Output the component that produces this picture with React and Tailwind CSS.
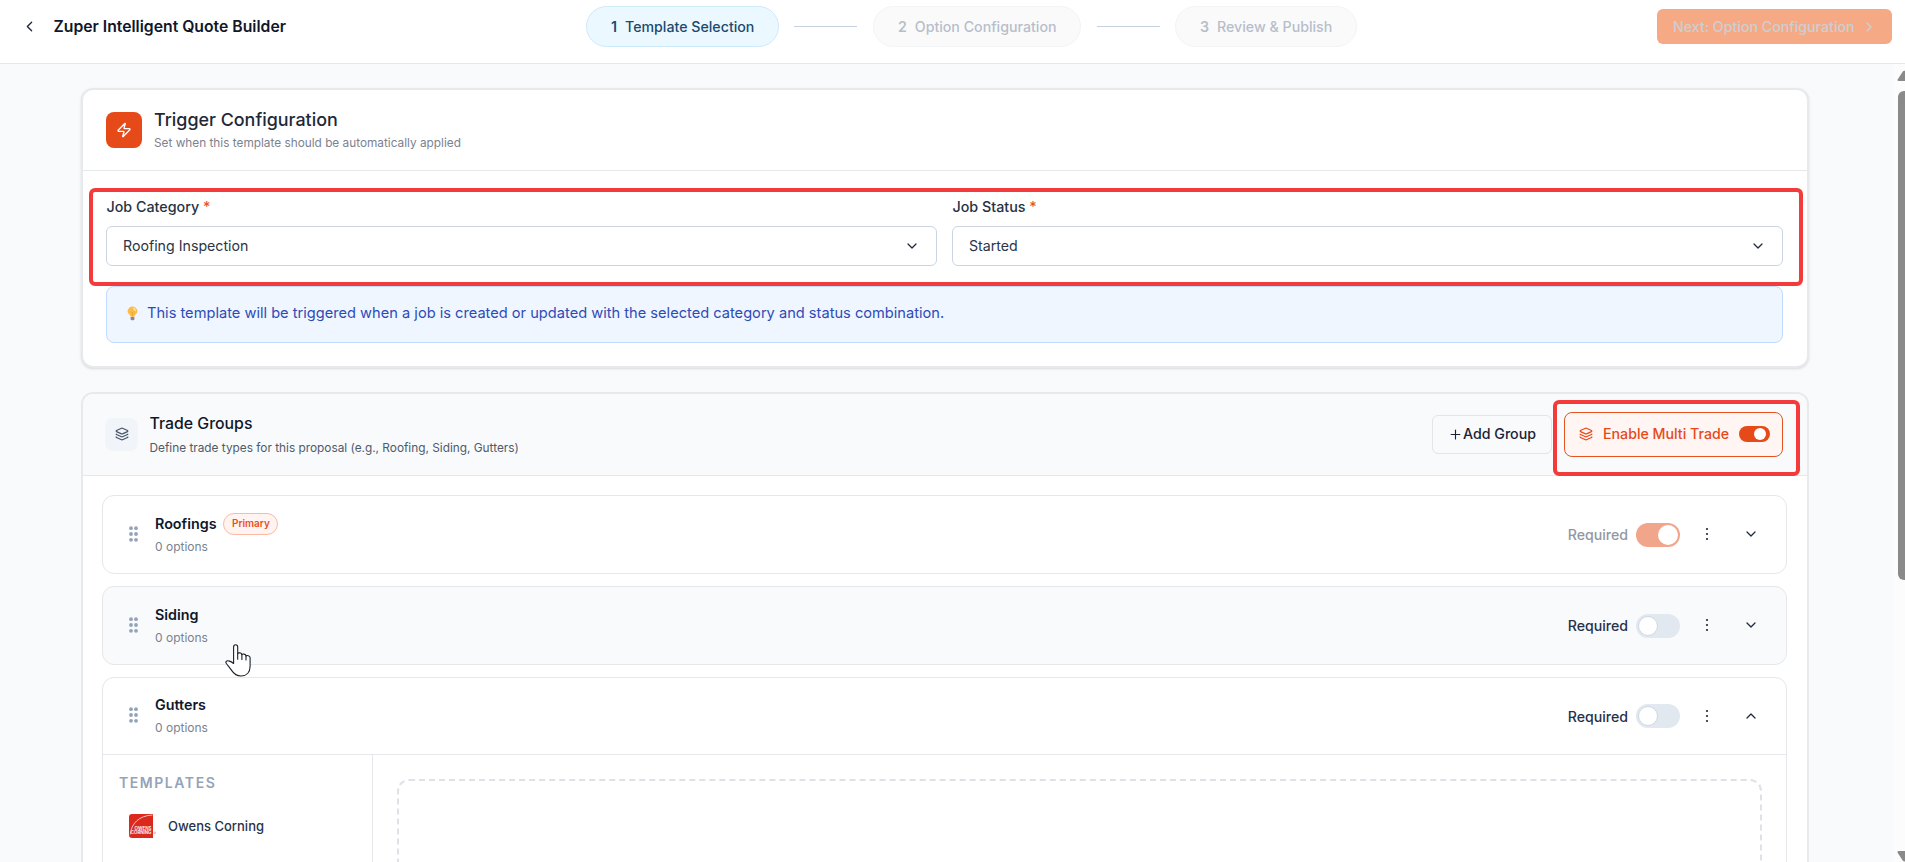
import React from 'react';
import { ChevronDown, ChevronLeft, ChevronRight, ChevronUp, Layers, Plus, Zap } from 'lucide-react';

function Step({ number, label, active }) {
  return (
    <div
      className={
        'flex h-[41px] items-center rounded-full border pl-[24px] pt-px text-[14.2px] leading-5 ' +
        (active ? 'border-[#cdeafb] bg-[#ecf8ff] text-[#1b4a6e]' : 'border-[#f3f4f5] bg-[#fafafa] text-[#b7becb]')
      }
    >
      <span className="font-semibold">{number}</span>
      <span className="ml-2 pr-[23.5px] font-medium">{label}</span>
    </div>
  );
}

function StepLine() {
  return <div className="mx-[15.5px] h-px w-[63px] bg-[#c5d1df]" />;
}

function SelectField({ label, value }) {
  return (
    <div className="flex-1">
      <div className="h-5 pl-[0.5px] text-[14.3px] font-[450] leading-5 text-[#263244]">
        {label} <span className="text-[#e8501f]">*</span>
      </div>
      <div className="mt-[9px] flex h-10 items-center justify-between rounded-md border border-[#cbd5e1] bg-white pl-4 pr-[16px] text-[14.2px] text-[#2a3547]">
        <span>{value}</span>
        <ChevronDown className="size-4 text-[#1e293b]" strokeWidth={1.9} />
      </div>
    </div>
  );
}

function DragHandle() {
  return (
    <svg viewBox="0 0 9 16" className="-mt-[2px] h-4 w-[9px] fill-[#94a3b8]">
      <circle cx="2" cy="2.2" r="1.9" />
      <circle cx="7" cy="2.2" r="1.9" />
      <circle cx="2" cy="8" r="1.9" />
      <circle cx="7" cy="8" r="1.9" />
      <circle cx="2" cy="13.8" r="1.9" />
      <circle cx="7" cy="13.8" r="1.9" />
    </svg>
  );
}

function GroupHeader({ name, primary, locked, open }) {
  return (
    <div className={'flex items-center pl-[26px] pr-[27px] ' + (open ? 'h-[76px]' : 'h-[77px]')}>
      <DragHandle />
      <div className={'ml-[17px] flex-1 ' + (open ? '' : 'pt-px')}>
        <div className="flex h-[22px] items-center text-[14.3px] font-semibold text-[#0f172a]">
          <span>{name}</span>
          {primary && (
            <span className="ml-[7px] flex h-[22px] items-center rounded-full border border-[#fcb9a3] bg-[#fff4f1] px-[7.5px] text-[10px] font-semibold text-[#e8501f]">
              Primary
            </span>
          )}
        </div>
        <div className="mt-px h-[22px] text-[12px] leading-[22px] text-[#7a8290]">0 options</div>
      </div>
      <span className={'pt-px text-[14.15px] font-medium ' + (locked ? 'text-[#9198a3]' : 'text-[#27324a]')}>Required</span>
      {locked ? (
        <div className="ml-2 flex h-6 w-11 items-center justify-end rounded-full bg-[#f1a58b] pr-0.5">
          <div className="size-5 rounded-full bg-white" />
        </div>
      ) : (
        <div className="ml-2 flex h-6 w-11 items-center rounded-full bg-[#e2e8f0] pl-0.5">
          <div className="size-5 rounded-full border border-[#cfd8e3] bg-white" />
        </div>
      )}
      <svg viewBox="0 0 4 14" className="-mt-px ml-[25px] h-[14px] w-1 fill-[#1e293b]">
        <circle cx="2" cy="2" r="1.1" />
        <circle cx="2" cy="7" r="1.1" />
        <circle cx="2" cy="12" r="1.1" />
      </svg>
      {open ? (
        <ChevronUp className="-mt-px ml-[34px] size-4 text-[#1e293b]" strokeWidth={1.9} />
      ) : (
        <ChevronDown className="-mt-px ml-[34px] size-4 text-[#1e293b]" strokeWidth={1.9} />
      )}
    </div>
  );
}

function OwensCorningLogo() {
  return (
    <svg viewBox="0 0 27 24" className="h-6 w-[27px]">
      <path d="M3 0H24V24H3Q0 24 0 21V3Q0 0 3 0Z" fill="#dc291e" />
      <path d="M1.2 20.5C2.4 9.5 10 1.6 23.5 1" fill="none" stroke="#fff" strokeWidth="0.7" />
      <text x="5.6" y="16" fontSize="4.4" fontWeight="600" fill="#fff" textLength="16.8" lengthAdjust="spacingAndGlyphs" fontFamily="Inter, sans-serif">OWENS</text>
      <text x="1.8" y="20.4" fontSize="4.4" fontWeight="600" fill="#fff" textLength="20.6" lengthAdjust="spacingAndGlyphs" fontFamily="Inter, sans-serif">CORNING</text>
      <circle cx="25.7" cy="18.8" r="0.9" fill="none" stroke="#ee8f89" strokeWidth="0.7" />
    </svg>
  );
}

function Scrollbar() {
  return (
    <div className="flex w-3 flex-col items-end overflow-hidden bg-[#fcfcfc]">
      <svg viewBox="0 0 8 12" className="mt-[6px] h-3 w-2 shrink-0 fill-[#8a8a8a]">
        <path d="M8 .8Q6.4 .5 5.5 2L.8 9.2Q-.2 11 1.8 11H8Z" />
      </svg>
      <div className="mt-[9px] h-[489px] w-[7px] shrink-0 rounded-l-[6px] bg-[#8a8a8a]" />
      <svg viewBox="0 0 8 11" className="mt-[271px] h-[11px] w-2 shrink-0 fill-[#8a8a8a]">
        <path d="M8 0H1.8Q-.2 0 .8 2L5.5 9.2Q6.4 10.6 8 10.5Z" />
      </svg>
    </div>
  );
}

function HandCursor() {
  return (
    <svg viewBox="0 0 26 33" className="absolute left-[122px] top-[56.5px] h-[33px] w-[26px]" fill="#fff" stroke="#1a202c" strokeWidth="1.1" strokeLinejoin="round" strokeLinecap="round">
      <path d="M8.6 19.5V2.9C8.6 1.5 9.5 .8 10.6 .8S12.7 1.5 12.7 2.9V9.6C13 8.6 16.7 8.3 16.9 10.6C17.6 9.8 20.8 9.7 21 12C21.8 11.2 25.1 11.3 25.1 13.8V22.2C25.1 28.5 21.4 32 16 32C11.5 32 9 30 6.6 26.4C4.8 23.7 2.7 21.4 1.2 19.2C.2 17.6 1.9 16.3 3.8 16.9C5.8 17.4 7.4 18.4 8.6 19.5Z" />
      <path d="M12.7 9.6V15.2M16.9 10.6V15.4M21 12V16" fill="none" />
    </svg>
  );
}

export default function App() {
  return (
    <div className="flex h-[862px] w-[1905px] flex-col overflow-hidden bg-[#f8fafc] font-['Inter',sans-serif]">
      <header className="flex h-16 shrink-0 items-start border-b border-[#e5e7eb] bg-white">
        <div className="flex h-[53px] w-[586px] items-center pl-[20.5px]">
          <ChevronLeft className="-mt-px size-[17px] text-[#1e293b]" strokeWidth={1.9} />
          <h1 className="ml-[16px] text-[15.75px] font-semibold leading-6 text-[#0f172a]">Zuper Intelligent Quote Builder</h1>
        </div>
        <nav className="flex h-[53px] flex-1 items-center">
          <Step number="1" label="Template Selection" active />
          <StepLine />
          <Step number="2" label="Option Configuration" />
          <StepLine />
          <Step number="3" label="Review & Publish" />
        </nav>
        <button className="mr-[13px] mt-[9px] flex h-[35px] w-[235px] items-center rounded-md bg-[#f5aa85] pl-4 text-[14.2px] font-medium text-[#cdced2]">
          <span className="pt-px">Next: Option Configuration</span>
          <ChevronRight className="ml-[6px] size-4" strokeWidth={2} />
        </button>
      </header>

      <div className="flex min-h-0 flex-1">
        <main className="flex-1 overflow-hidden pl-[81px] pt-6">
          <section className="relative w-[1728px] rounded-xl border-2 border-[#e7e9ed] bg-white shadow-sm">
            <div className="flex h-[81px] items-center border-b border-[#e5e7eb] pl-[23px]">
              <div className="flex size-9 items-center justify-center rounded-lg bg-[#e64a19]">
                <Zap className="size-4 text-white" strokeWidth={2} />
              </div>
              <div className="ml-3 pt-px">
                <h2 className="h-6 text-[17.9px] font-[550] leading-6 text-[#1f2937]">Trigger Configuration</h2>
                <p className="mt-px h-5 text-[11.82px] leading-5 text-[#7a8290]">Set when this template should be automatically applied</p>
              </div>
            </div>
            <div className="pb-[23px] pl-[23px] pr-[24px] pt-[26px]">
              <div className="flex gap-[15px]">
                <SelectField label="Job Category" value="Roofing Inspection" />
                <SelectField label="Job Status" value="Started" />
              </div>
              <div className="mt-5 flex h-[57px] items-center rounded-lg border border-[#bfdbfe] bg-[#eff6ff] pb-[2px] pl-[20px] text-[14.63px] text-[#2e4bb8]">
                <svg viewBox="0 0 11 15" className="h-[15px] w-[11px]">
                  <path d="M5.5 .5A4.9 4.9 0 0 0 .6 5.3C.6 8 3.4 8.6 3.6 10.8H7.4C7.6 8.6 10.4 8 10.4 5.3A4.9 4.9 0 0 0 5.5 .5Z" fill="#fcbd47" />
                  <path d="M6.2 1.6Q9 2.3 8.6 5.6Q6.5 5 6.2 1.6Z" fill="#fff0b3" />
                  <path d="M4 5.5 5.5 7 7 5.5M5.5 7v3.6" fill="none" stroke="#f09a2b" strokeWidth=".7" />
                  <path d="M3.6 11H7.4V13.4Q5.5 15.3 3.6 13.4Z" fill="#8d8794" />
                </svg>
                <span className="ml-[9px] whitespace-nowrap pt-px">
                  This template will be triggered when a job is created or updated with the selected category and status combination.
                </span>
              </div>
            </div>
            <div className="absolute left-[6px] top-[98px] h-[98px] w-[1714px] rounded-md border-4 border-[#f43b3b]" />
          </section>

          <section className="relative mt-6 h-[600px] w-[1728px] rounded-xl border-2 border-[#e7e9ed] bg-white">
            <div className="flex h-[82px] items-center rounded-t-[10px] border-b border-[#e5e7eb] bg-[#f8fafc] pl-[22px] pr-[24px]">
              <div className="flex size-[33px] items-center justify-center rounded-lg bg-[#f1f5f9]">
                <Layers className="-mt-px size-[14px] text-[#475569]" strokeWidth={2} />
              </div>
              <div className="ml-[11.5px] flex-1 pt-[2px]">
                <h2 className="h-6 text-[15.85px] font-[550] leading-6 text-[#0f172a]">Trade Groups</h2>
                <p className="h-6 text-[11.83px] leading-6 text-[#4f5b6b]">Define trade types for this proposal (e.g., Roofing, Siding, Gutters)</p>
              </div>
              <button className="-mt-px flex h-[39px] w-[120px] items-center rounded-md border border-[#e2e5ea] bg-[#f9fafc] pl-[15px] text-[14.2px] font-medium text-[#1a2436]">
                <Plus className="size-[15px]" strokeWidth={1.8} />
                <span>Add Group</span>
              </button>
              <button className="-mt-px ml-3 flex h-[45px] w-[219px] items-center rounded-lg border border-[#e8521f] bg-[#fff5f2] pb-px pl-[14px] text-[14.2px] font-medium text-[#e64a19]">
                <Layers className="size-[14px]" strokeWidth={2} />
                <span className="ml-[10px] whitespace-nowrap">Enable Multi Trade</span>
                <span className="ml-[10px] flex h-4 w-[31px] items-center justify-end rounded-full bg-[#e64a19] pr-1">
                  <span className="size-3 rounded-full bg-white" />
                </span>
              </button>
            </div>

            <div className="flex flex-col gap-3 pl-[19px] pr-[20px] pt-[19px]">
              <div className="rounded-xl border border-[#e5e7eb] bg-white">
                <GroupHeader name="Roofings" primary locked />
              </div>
              <div className="relative rounded-xl border border-[#e5e7eb] bg-[#f9fafc]">
                <GroupHeader name="Siding" />
                <HandCursor />
              </div>
              <div className="rounded-t-xl border border-[#e5e7eb] bg-white">
                <GroupHeader name="Gutters" open />
                <div className="flex h-[300px] border-t border-[#e5e7eb]">
                  <aside className="w-[270px] border-r border-[#e5e7eb] pl-4 pt-[18px]">
                    <h3 className="h-5 text-[14px] font-semibold leading-5 tracking-[1.55px] text-[#94a3b8]">TEMPLATES</h3>
                    <div className="mt-[21px] flex h-6 items-center pl-[10px]">
                      <OwensCorningLogo />
                      <span className="ml-[12px] pt-[2px] text-[13px] font-[450] text-[#27324a]">Owens Corning</span>
                    </div>
                  </aside>
                  <div className="flex-1 p-6">
                    <div className="h-full rounded-xl border-2 border-dashed border-[#dfe1e7]" />
                  </div>
                </div>
              </div>
            </div>
            <div className="absolute left-[1470px] top-[6px] h-[76px] w-[247px] rounded-md border-4 border-[#f43b3b]" />
          </section>
        </main>
        <Scrollbar />
      </div>
    </div>
  );
}
